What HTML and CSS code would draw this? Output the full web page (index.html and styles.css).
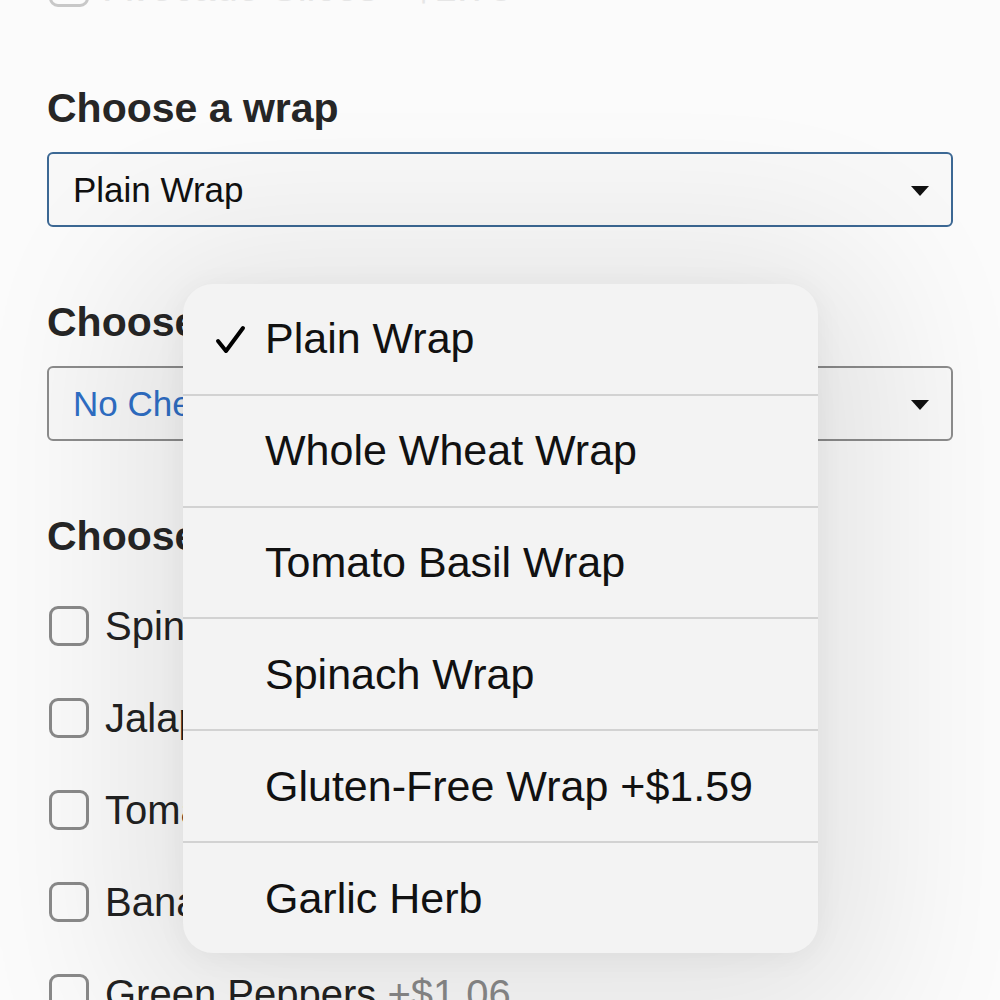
FILE: index.html
```html
<!DOCTYPE html>
<html>
<head>
<meta charset="utf-8">
<link rel="stylesheet" href="styles.css">
</head>
<body>
<div class="page">
  <div class="row row-top">
    <span class="box"></span>
    <span class="label faded">Avocado Slices +$1.75</span>
  </div>

  <h2 class="heading h-first">Choose a wrap</h2>
  <div class="select select-focus">
    <span class="sel-text">Plain Wrap</span>
    <span class="caret"></span>
  </div>

  <h2 class="heading">Choose a cheese</h2>
  <div class="select">
    <span class="sel-text blue">No Cheese</span>
    <span class="caret"></span>
  </div>

  <h2 class="heading">Choose veggies</h2>
  <div class="checks">
    <div class="row"><span class="box"></span><span class="label">Spinach</span></div>
    <div class="row"><span class="box"></span><span class="label">Jalapeños</span></div>
    <div class="row"><span class="box"></span><span class="label">Tomatoes</span></div>
    <div class="row"><span class="box"></span><span class="label">Banana Peppers</span></div>
    <div class="row"><span class="box"></span><span class="label">Green Peppers <span class="price">+$1.06</span></span></div>
  </div>
</div>

<div class="popup">
  <div class="item">
    <svg class="check" width="32" height="30" viewBox="0 0 32 30"><polyline points="3,16 11,26 28,3" fill="none" stroke="#000" stroke-width="4" stroke-linecap="round" stroke-linejoin="round"/></svg>
    <span>Plain Wrap</span>
  </div>
  <div class="item"><span>Whole Wheat Wrap</span></div>
  <div class="item"><span>Tomato Basil Wrap</span></div>
  <div class="item"><span>Spinach Wrap</span></div>
  <div class="item"><span>Gluten-Free Wrap +$1.59</span></div>
  <div class="item"><span>Garlic Herb</span></div>
</div>
</body>
</html>
```

FILE: styles.css
```css
html, body {
  margin: 0;
  padding: 0;
  width: 1000px;
  height: 1000px;
  overflow: hidden;
  background: #fbfbfb;
  font-family: "Liberation Sans", Arial, sans-serif;
}

.page {
  padding: 0 47px;
}

.row {
  display: flex;
  align-items: center;
  gap: 16px;
  height: 92px;
  padding-left: 2px;
}

.row-top {
  height: 40px;
  margin-top: -33px;
}

.box {
  box-sizing: border-box;
  width: 40px;
  height: 40px;
  border: 3px solid #8a8a8a;
  border-radius: 9px;
  flex: none;
}

.row-top .box {
  border-color: #c8c8c8;
}

.label {
  font-size: 40px;
  color: #222;
  white-space: nowrap;
}

.label.faded {
  color: #e6e6e6;
}

.price {
  color: #8a8a8a;
}

.heading {
  margin: 71px 0 20px;
  font-size: 41px;
  line-height: 48px;
  font-weight: bold;
  color: #262626;
}

.heading.h-first {
  margin-top: 77px;
}

.select {
  box-sizing: border-box;
  height: 75px;
  border: 2px solid #8c8c8c;
  border-radius: 6px;
  display: flex;
  align-items: center;
  justify-content: space-between;
  padding: 0 22px 0 24px;
  background: rgba(245, 245, 245, 0.5);
}

.select-focus {
  border-color: #3c6894;
}

.sel-text {
  font-size: 35px;
  color: #111;
}

.sel-text.blue {
  color: #2f6fc6;
}

.caret {
  width: 0;
  height: 0;
  border-left: 9px solid transparent;
  border-right: 9px solid transparent;
  border-top: 10px solid #111;
  margin-top: 2px;
}

.checks {
  margin-top: 8px;
}

.popup {
  position: absolute;
  left: 183px;
  top: 284px;
  width: 635px;
  height: 669px;
  border-radius: 30px;
  background: #f3f3f3;
  box-shadow: 0 20px 160px 60px rgba(0, 0, 0, 0.09), 0 4px 30px rgba(0, 0, 0, 0.05);
  display: flex;
  flex-direction: column;
  overflow: hidden;
}

.item {
  flex: 1;
  position: relative;
  display: flex;
  align-items: center;
  padding-left: 82px;
  font-size: 43px;
  color: #111;
  border-top: 2px solid #d2d2d2;
}

.item:first-child {
  border-top: none;
}

.check {
  position: absolute;
  left: 32px;
  top: 50%;
  margin-top: -14px;
}
```
